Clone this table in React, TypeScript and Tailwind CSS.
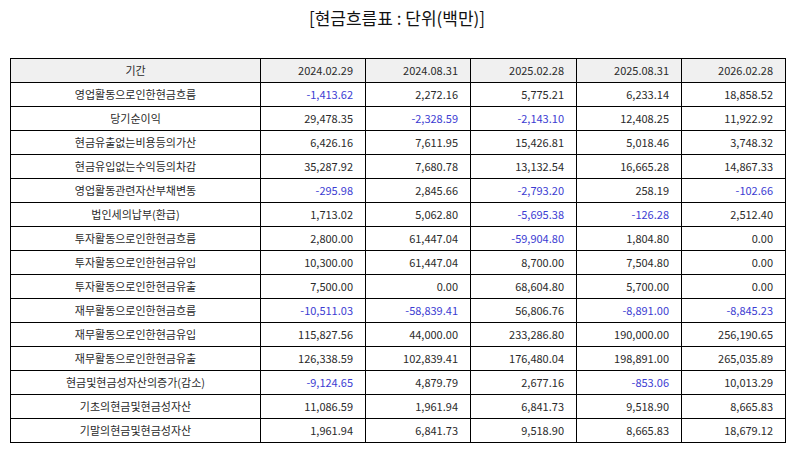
const headers = ["기간", "2024.02.29", "2024.08.31", "2025.02.28", "2025.08.31", "2026.02.28"];

const rows: [string, string[]][] = [
  ["영업활동으로인한현금흐름", ["-1,413.62", "2,272.16", "5,775.21", "6,233.14", "18,858.52"]],
  ["당기순이익", ["29,478.35", "-2,328.59", "-2,143.10", "12,408.25", "11,922.92"]],
  ["현금유출없는비용등의가산", ["6,426.16", "7,611.95", "15,426.81", "5,018.46", "3,748.32"]],
  ["현금유입없는수익등의차감", ["35,287.92", "7,680.78", "13,132.54", "16,665.28", "14,867.33"]],
  ["영업활동관련자산부채변동", ["-295.98", "2,845.66", "-2,793.20", "258.19", "-102.66"]],
  ["법인세의납부(환급)", ["1,713.02", "5,062.80", "-5,695.38", "-126.28", "2,512.40"]],
  ["투자활동으로인한현금흐름", ["2,800.00", "61,447.04", "-59,904.80", "1,804.80", "0.00"]],
  ["투자활동으로인한현금유입", ["10,300.00", "61,447.04", "8,700.00", "7,504.80", "0.00"]],
  ["투자활동으로인한현금유출", ["7,500.00", "0.00", "68,604.80", "5,700.00", "0.00"]],
  ["재무활동으로인한현금흐름", ["-10,511.03", "-58,839.41", "56,806.76", "-8,891.00", "-8,845.23"]],
  ["재무활동으로인한현금유입", ["115,827.56", "44,000.00", "233,286.80", "190,000.00", "256,190.65"]],
  ["재무활동으로인한현금유출", ["126,338.59", "102,839.41", "176,480.04", "198,891.00", "265,035.89"]],
  ["현금및현금성자산의증가(감소)", ["-9,124.65", "4,879.79", "2,677.16", "-853.06", "10,013.29"]],
  ["기초의현금및현금성자산", ["11,086.59", "1,961.94", "6,841.73", "9,518.90", "8,665.83"]],
  ["기말의현금및현금성자산", ["1,961.94", "6,841.73", "9,518.90", "8,665.83", "18,679.12"]],
];

export default function App() {
  return (
    <div className="w-[794px] h-[452px] bg-white text-[#2a2a2a] font-['Noto_Sans_CJK_KR','Noto_Sans',sans-serif]">
      <h1 className="pt-[6px] h-[58px] text-center text-[17px] leading-[24px] text-[#111]">
        [현금흐름표 : 단위(백만)]
      </h1>
      <table className="ml-[10px] w-[775px] table-fixed border-collapse text-[11px]">
        <colgroup>
          <col className="w-[250px]" />
          <col className="w-[105px]" />
          <col className="w-[105px]" />
          <col className="w-[106px]" />
          <col className="w-[105px]" />
          <col className="w-[104px]" />
        </colgroup>
        <thead>
          <tr className="h-[24px] bg-[#f0f0f0]">
            {headers.map((h, i) => (
              <th
                key={h}
                className={`border border-black font-normal p-0 ${i === 0 ? "text-center" : "text-right pr-[12px]"}`}
              >
                {h}
              </th>
            ))}
          </tr>
        </thead>
        <tbody>
          {rows.map(([label, vals]) => (
            <tr key={label} className="h-[24px]">
              <td className="border border-black text-center p-0">{label}</td>
              {vals.map((v, i) => (
                <td
                  key={i}
                  className={`border border-black text-right p-0 pr-[12px] ${v.startsWith("-") ? "text-[#3c3cd2]" : ""}`}
                >
                  {v}
                </td>
              ))}
            </tr>
          ))}
        </tbody>
      </table>
    </div>
  );
}
